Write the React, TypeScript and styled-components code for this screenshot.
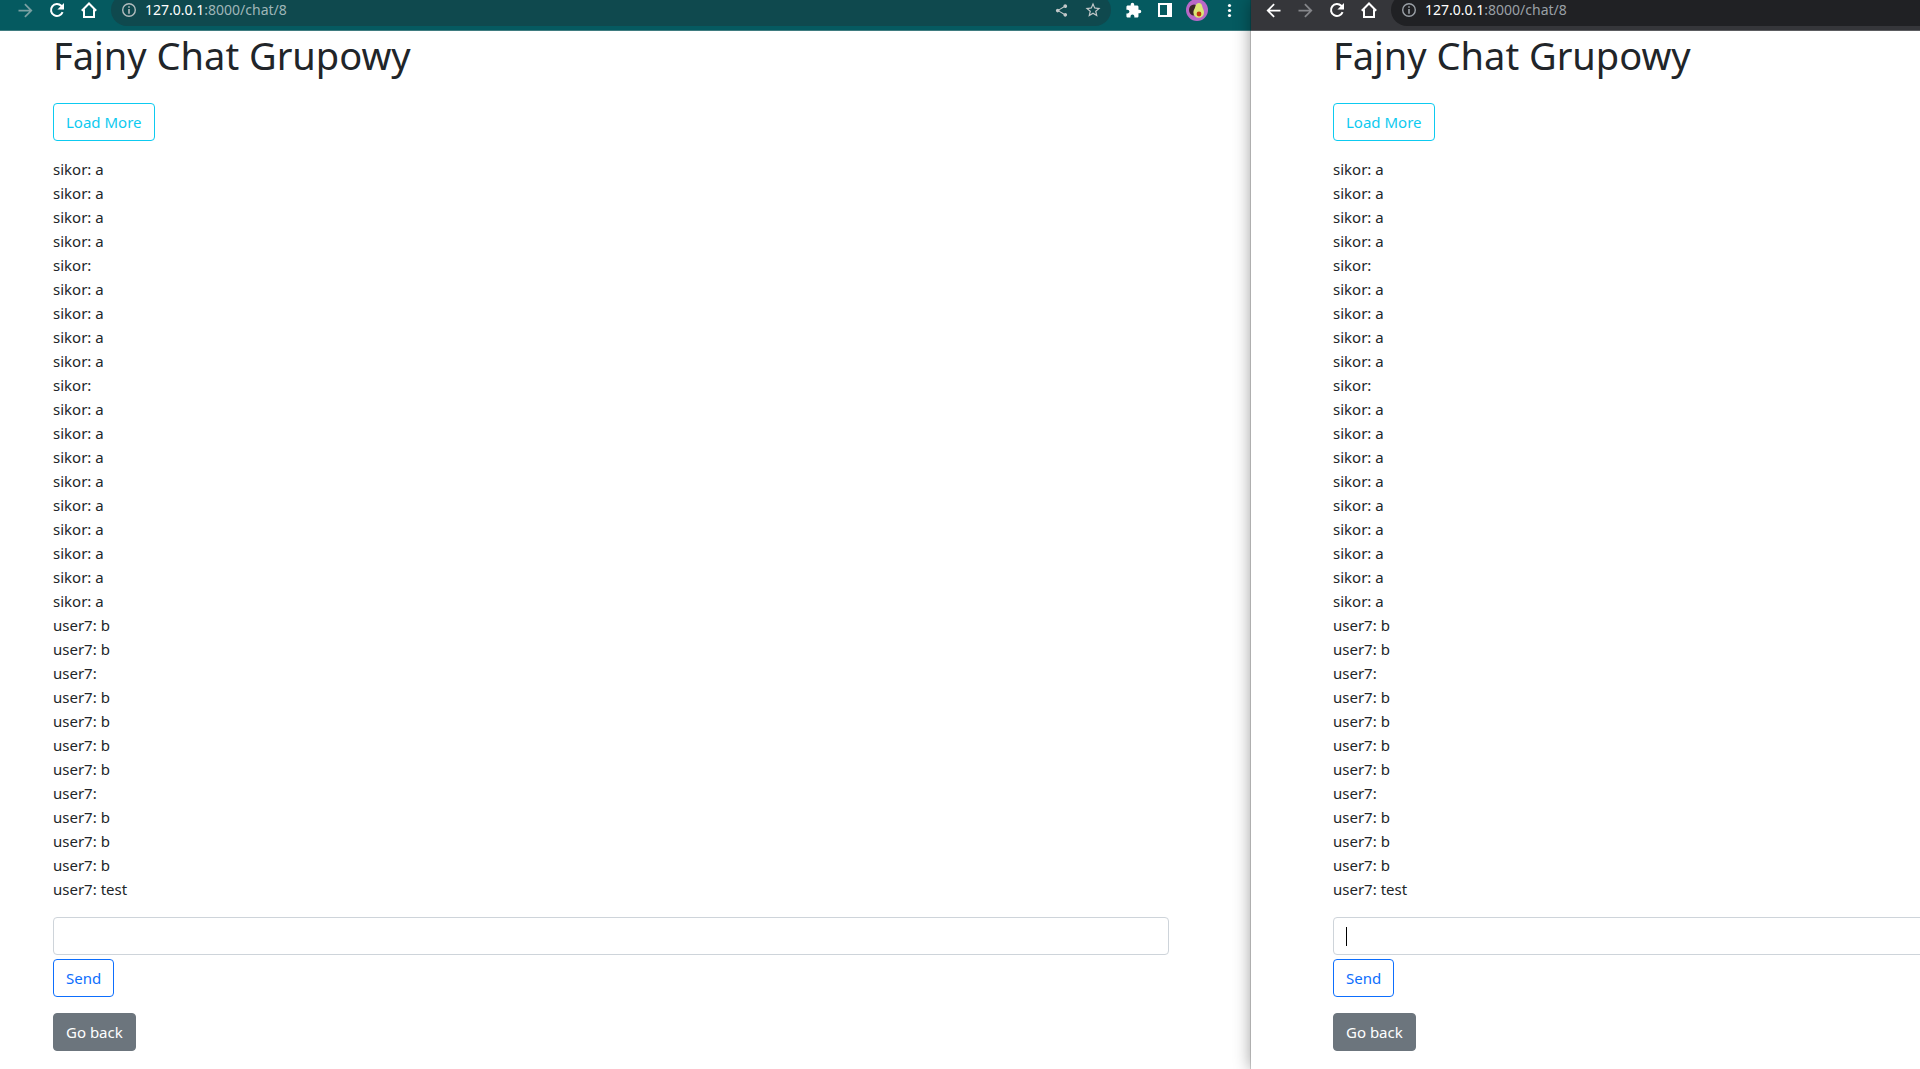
import React from "react";
import styled, { createGlobalStyle } from "styled-components";
import { MdArrowBack, MdArrowForward, MdExtension, MdShare, MdStarOutline } from "react-icons/md";

const GlobalStyle = createGlobalStyle`
  *, *::before, *::after { box-sizing: border-box; }
  body {
    margin: 0;
    background: #fff;
    color: #212529;
    font: 15px/24px "Noto Sans", "Open Sans", sans-serif;
  }
`;

type Theme = "teal" | "dark";

const palette = {
  teal: { bar: "#055a60", line: "#3f7c80", pill: "#0f494e", dim: "#7ba0a2", path: "#9fb6b8", info: "#b3bcbd" },
  dark: { bar: "#35363a", line: "#5b5c60", pill: "#202124", dim: "#85868a", path: "#9aa0a6", info: "#9aa0a6" },
};

const Desktop = styled.div`
  display: grid;
  grid-template-columns: minmax(0, 1251fr) minmax(0, 669fr);
  min-height: 100vh;
`;

const Window = styled.section<{ $raised?: boolean }>`
  position: relative;
  min-width: 0;
  overflow: hidden;
  background: #fff;
  box-shadow: ${(p) => (p.$raised ? "0 0 0 1px rgba(0,0,0,.15), 0 0 16px rgba(0,0,0,.4)" : "none")};
`;

const Toolbar = styled.header<{ $theme: Theme }>`
  display: flex;
  align-items: center;
  gap: 6px;
  height: 31px;
  padding: 0 6px 10px ${(p) => (p.$theme === "teal" ? "9px" : "6px")};
  overflow: hidden;
  background: ${(p) => palette[p.$theme].bar};
  border-bottom: 1px solid ${(p) => palette[p.$theme].line};
`;

const ButtonGroup = styled.div`
  display: flex;
  flex: none;
`;

const IconButton = styled.button<{ $color?: string }>`
  display: flex;
  align-items: center;
  justify-content: center;
  width: 32px;
  height: 32px;
  padding: 0;
  border: 0;
  background: none;
  color: ${(p) => p.$color ?? "#fff"};
`;

const AddressBar = styled.div<{ $theme: Theme; $bleed: boolean }>`
  display: flex;
  flex: 1;
  align-items: center;
  gap: 8px;
  height: 32px;
  min-width: 0;
  margin-right: ${(p) => (p.$bleed ? "-40px" : "0")};
  padding: 0 2px 0 10px;
  border-radius: 16px;
  background: ${(p) => palette[p.$theme].pill};
  color: ${(p) => palette[p.$theme].info};
`;

const Address = styled.div<{ $theme: Theme }>`
  flex: 1;
  font-size: 14px;
  line-height: 20px;
  white-space: nowrap;
  color: ${(p) => palette[p.$theme].path};
`;

const Host = styled.span`
  color: #fff;
`;

const Page = styled.main<{ $clipped: boolean }>`
  display: flex;
  flex-direction: column;
  align-items: flex-start;
  gap: 16px;
  padding: ${(p) => (p.$clipped ? "0 82px 16px 53px" : "0 0 16px 82px")};
`;

const Title = styled.h1`
  margin: 0 0 8px;
  font-size: 38px;
  font-weight: 400;
  line-height: 48px;
  white-space: nowrap;
`;

const variants = {
  info: "color: #0dcaf0; border-color: #0dcaf0; background: transparent;",
  primary: "color: #0d6efd; border-color: #0d6efd; background: transparent;",
  secondary: "color: #fff; border-color: #6c757d; background: #6c757d;",
};

const Button = styled.button<{ $variant: keyof typeof variants }>`
  padding: 6px 12px;
  border: 1px solid;
  border-radius: 4px;
  font: inherit;
  ${(p) => variants[p.$variant]}
`;

const Messages = styled.ul`
  margin: 0;
  padding: 0;
  list-style: none;
`;

const Form = styled.form<{ $wide: boolean }>`
  display: flex;
  flex-direction: column;
  align-items: flex-start;
  gap: 4px;
  width: 100%;
  min-width: ${(p) => (p.$wide ? "1116px" : "0")};
`;

const Field = styled.div`
  position: relative;
  width: 100%;
`;

const Input = styled.input`
  display: block;
  width: 100%;
  height: 38px;
  padding: 6px 12px;
  border: 1px solid #ced4da;
  border-radius: 4px;
  background: #fff;
  color: #212529;
  font: inherit;
`;

const Caret = styled.span`
  position: absolute;
  top: 10px;
  left: 13px;
  width: 1px;
  height: 19px;
  background: #000;
`;

const ReloadIcon = () => (
  <svg width="16" height="16" viewBox="0 0 16 16" fill="none" aria-hidden="true">
    <path d="M13.600 10.200A6 6 0 1 1 12.300 3.800L13.400 5" stroke="currentColor" strokeWidth="2" />
    <path d="M15 1v6.600H8.400z" fill="currentColor" />
  </svg>
);

const HomeIcon = () => (
  <svg width="16" height="16" viewBox="0 0 16 16" fill="none" stroke="currentColor" strokeWidth="2" aria-hidden="true">
    <path d="M.8 8.700 8 1.500l7.200 7.200M3 7.500V15h10V7.500" />
  </svg>
);

const InfoIcon = () => (
  <svg width="16" height="16" viewBox="0 0 16 16" fill="none" stroke="currentColor" aria-hidden="true">
    <circle cx="8" cy="8" r="6.3" strokeWidth="1.4" />
    <path d="M8 4.200v1.600M8 7v4.800" strokeWidth="1.6" />
  </svg>
);

const PanelIcon = () => (
  <svg width="14" height="14" viewBox="0 0 14 14" fill="currentColor" aria-hidden="true">
    <path fillRule="evenodd" d="M0 0h14v14H0zM2 2v10h7V2z" />
  </svg>
);

const DotsIcon = () => (
  <svg width="16" height="16" viewBox="0 0 16 16" fill="currentColor" aria-hidden="true">
    <circle cx="8.5" cy="3.5" r="1.6" />
    <circle cx="8.5" cy="8.5" r="1.6" />
    <circle cx="8.5" cy="13.5" r="1.6" />
  </svg>
);

const AvatarIcon = () => (
  <svg width="22" height="22" viewBox="0 0 22 22" aria-hidden="true">
    <circle cx="11" cy="11" r="11" fill="#b968c7" />
    <ellipse cx="8" cy="11" rx="5" ry="5.6" fill="#3c2527" />
    <path d="M13 4c2 0 3 1.600 3.400 4 .4 2 1.600 3 1.600 5.500a5.300 5.300 0 0 1-10.600 0c0-2.500 1.400-3.500 1.800-5.500C9.700 5.600 11 4 13 4z" fill="#dce775" />
    <circle cx="13" cy="15" r="2.4" fill="#bf360c" />
  </svg>
);

const log: [string, string][] = [
  ..."aaaa aaaa aaaaaaaaa".split("").map((t): [string, string] => ["sikor", t.trim()]),
  ..."bb bbbb bbb".split("").map((t): [string, string] => ["user7", t.trim()]),
  ["user7", "test"],
];

function BrowserWindow({ theme }: { theme: Theme }) {
  const front = theme === "dark";
  const colors = palette[theme];
  const inputId = `message-${theme}`;
  return (
    <Window $raised={front}>
      <Toolbar $theme={theme}>
        <ButtonGroup>
          {front && <IconButton aria-label="Back"><MdArrowBack size={21} /></IconButton>}
          <IconButton aria-label="Forward" $color={colors.dim}><MdArrowForward size={21} /></IconButton>
          <IconButton aria-label="Reload"><ReloadIcon /></IconButton>
          <IconButton aria-label="Home"><HomeIcon /></IconButton>
        </ButtonGroup>
        <AddressBar $theme={theme} $bleed={front}>
          <InfoIcon />
          <Address $theme={theme}><Host>127.0.0.1</Host>:8000/chat/8</Address>
          {!front && (
            <ButtonGroup>
              <IconButton aria-label="Share" $color="#c3c8c9"><MdShare size={15} /></IconButton>
              <IconButton aria-label="Bookmark" $color="#c3c8c9"><MdStarOutline size={18} /></IconButton>
            </ButtonGroup>
          )}
        </AddressBar>
        {!front && (
          <ButtonGroup>
            <IconButton aria-label="Extensions"><MdExtension size={17} /></IconButton>
            <IconButton aria-label="Side panel"><PanelIcon /></IconButton>
            <IconButton aria-label="Profile"><AvatarIcon /></IconButton>
            <IconButton aria-label="Menu"><DotsIcon /></IconButton>
          </ButtonGroup>
        )}
      </Toolbar>
      <Page $clipped={!front}>
        <Title>Fajny Chat Grupowy</Title>
        <Button type="button" $variant="info">Load More</Button>
        <Messages>
          {log.map(([user, text], i) => <li key={i}>{user}: {text}</li>)}
        </Messages>
        <Form $wide={front} onSubmit={(e) => e.preventDefault()}>
          <Field>
            <Input id={inputId} type="text" aria-label="Message" autoComplete="off" />
            {front && <Caret />}
          </Field>
          <Button type="submit" $variant="primary">Send</Button>
        </Form>
        <Button type="button" $variant="secondary">Go back</Button>
      </Page>
    </Window>
  );
}

export default function App() {
  return (
    <>
      <GlobalStyle />
      <Desktop>
        <BrowserWindow theme="teal" />
        <BrowserWindow theme="dark" />
      </Desktop>
    </>
  );
}
